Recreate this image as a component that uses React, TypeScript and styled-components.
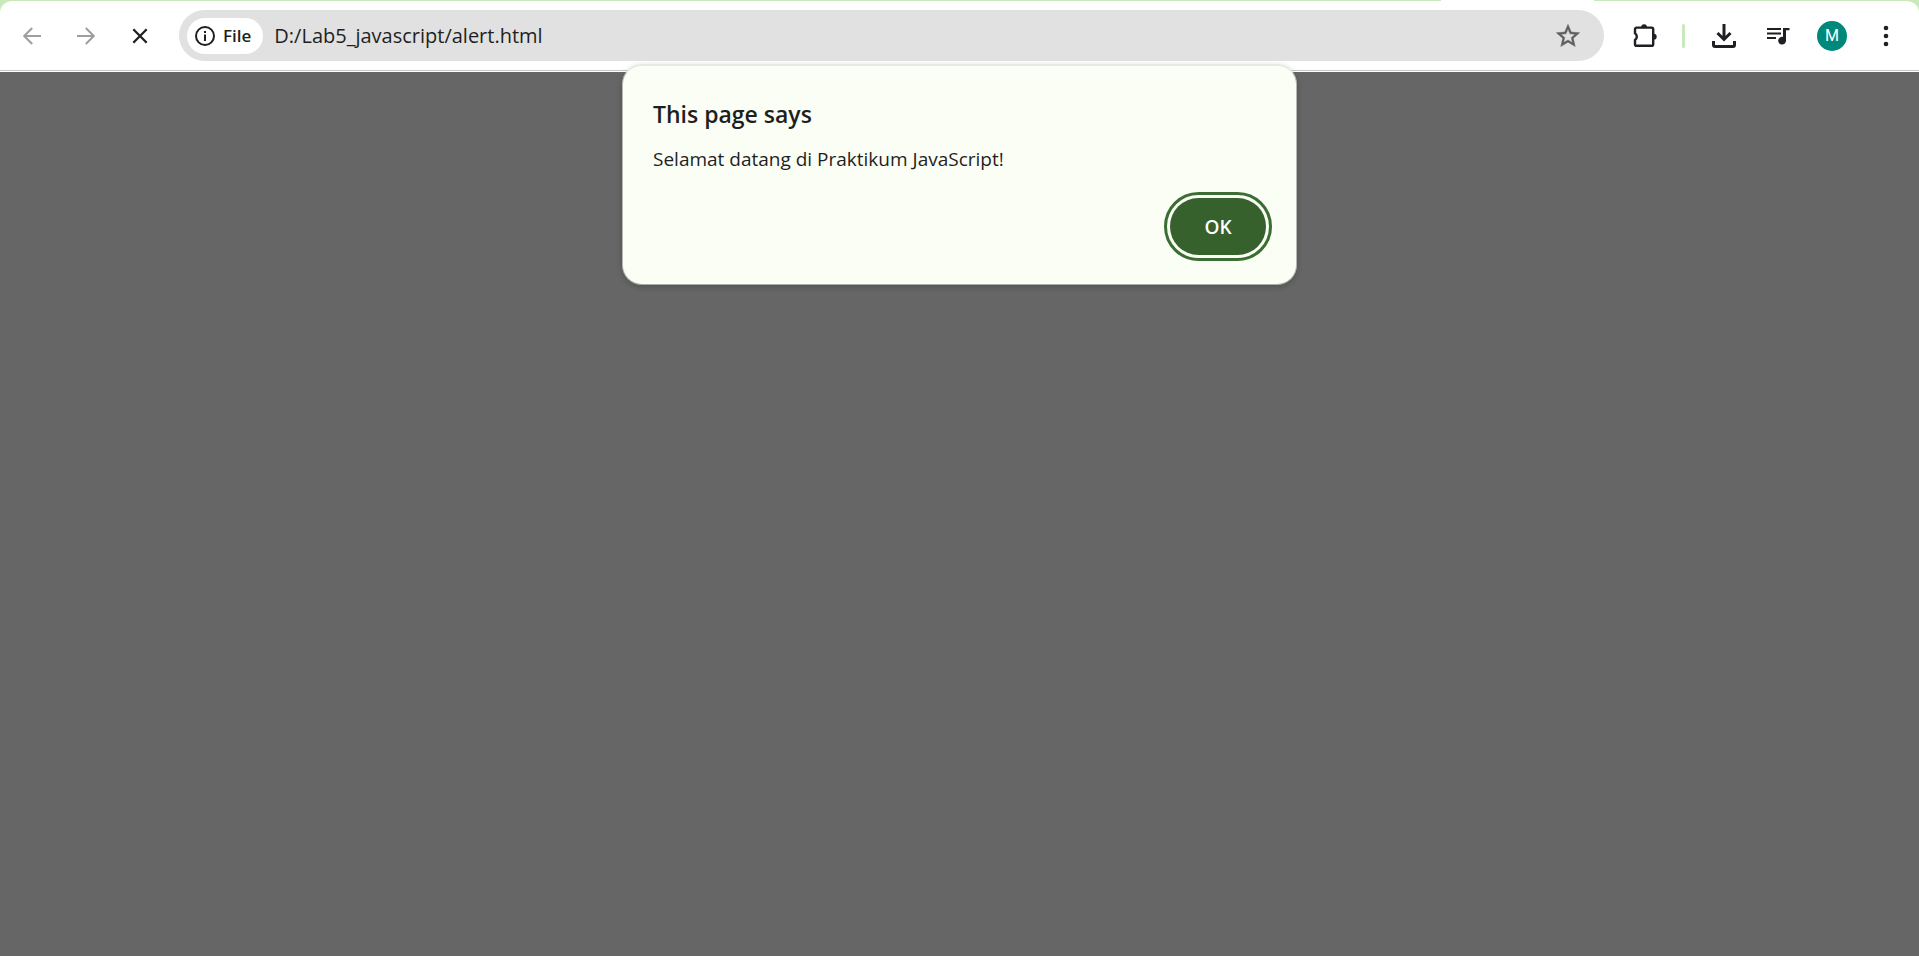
import React from "react";
import styled, { createGlobalStyle } from "styled-components";

const GlobalStyle = createGlobalStyle`
  * { box-sizing: border-box; }
  body { margin: 0; font-family: "Open Sans", "Noto Sans", sans-serif; color: #1f1f1f; }
  button, input { font: inherit; color: inherit; border: 0; padding: 0; background: none; }
  svg { display: block; }
`;

const Window = styled.div`
  position: relative;
  display: flex;
  flex-direction: column;
  min-height: 100vh;
  background: #666666;
`;

const Frame = styled.header`
  background: #c8e9b9;
`;

const TabStrip = styled.div`
  display: flex;
  justify-content: flex-end;
  height: 1px;
  padding-right: 325px;
`;

const ActiveTab = styled.div`
  width: 153px;
  background: #ffffff;
`;

const Toolbar = styled.div`
  display: flex;
  align-items: center;
  height: 71px;
  padding: 0 6px 2px 5px;
  background: #ffffff;
  border-radius: 12px 12px 0 0;
  box-shadow: inset 0 -1px #ffffff, inset 0 -2px #c4c7c5;
`;

const IconButton = styled.button<{ $color?: string }>`
  display: grid;
  place-items: center;
  flex: none;
  width: 54px;
  height: 53px;
  color: ${(p) => p.$color ?? "#1f1f24"};
`;

const AddressBar = styled.div`
  display: flex;
  align-items: center;
  flex: 1;
  height: 51px;
  margin: 0 14px 0 12px;
  padding: 0 9px 0 8px;
  background: #e1e1e1;
  border-radius: 26px;
`;

const SiteChip = styled.button`
  display: flex;
  align-items: center;
  gap: 8px;
  height: 36px;
  padding: 0 12px 0 8px;
  background: #ffffff;
  border-radius: 18px;
  font-size: 17px;
  font-weight: 600;
  line-height: 24px;
`;

const UrlInput = styled.input`
  flex: 1;
  min-width: 0;
  margin-left: 11px;
  font-size: 20px;
  line-height: 28px;
  outline: none;
`;

const Divider = styled.span`
  width: 3px;
  height: 24px;
  margin: 0 12px 0 10px;
  background: #c8e9b9;
  border-radius: 2px;
`;

const Avatar = styled.span`
  display: grid;
  place-items: center;
  width: 30px;
  height: 30px;
  border-radius: 50%;
  background: #00897b;
  color: #ffffff;
  font: 16px/30px Roboto, sans-serif;
`;

const Page = styled.main`
  flex: 1;
`;

const Dialog = styled.section`
  position: absolute;
  top: 64px;
  left: 0;
  right: 0;
  display: flex;
  flex-direction: column;
  width: 675px;
  max-width: 100%;
  margin: 0 auto;
  padding: 32px 30px 29px 30px;
  background: #fafef5;
  border: solid;
  border-width: 2px 1px 1px;
  border-color: #e8ebe4 #b4b8b0 #a9ada5;
  border-radius: 20px;
  box-shadow: 0 2px 6px rgba(0, 0, 0, 0.2);
`;

const DialogTitle = styled.h1`
  margin: 0;
  font-size: 23px;
  font-weight: 600;
  line-height: 32px;
`;

const DialogMessage = styled.p`
  margin: 15px 0 25px;
  font-size: 19px;
  line-height: 28px;
`;

const OkButton = styled.button`
  align-self: flex-end;
  width: 96px;
  height: 57px;
  border-radius: 29px;
  background: #36602c;
  color: #ffffff;
  font-size: 19px;
  font-weight: 600;
  outline: 3px solid #3c6d33;
  outline-offset: 3px;
`;

const Arrow = ({ forward = false }: { forward?: boolean }) => (
  <svg width="18" height="18" viewBox="0 0 18 18" fill="none" stroke="currentColor" strokeWidth="2">
    {forward ? <path d="M0 9h16.5M8.8 1l8 8-8 8" /> : <path d="M18 9H1.5M9.2 1l-8 8 8 8" />}
  </svg>
);

const StopIcon = () => (
  <svg width="16" height="16" viewBox="0 0 16 16" fill="none" stroke="currentColor" strokeWidth="2.3">
    <path d="M1.3 1.3l13.4 13.4M14.7 1.3L1.3 14.7" />
  </svg>
);

const InfoIcon = () => (
  <svg width="20" height="20" viewBox="0 0 20 20">
    <circle cx="10" cy="10" r="9" fill="none" stroke="currentColor" strokeWidth="2" />
    <path d="M9 5h2v2H9zM9 8.6h2V15H9z" fill="currentColor" />
  </svg>
);

const StarIcon = () => (
  <svg width="28" height="28" viewBox="0 0 24 24" fill="currentColor" stroke="currentColor" strokeWidth="0.4">
    <path d="M22 9.24l-7.19-.62L12 2 9.19 8.63 2 9.24l5.46 4.73L5.82 21 12 17.27 18.18 21l-1.63-7.03L22 9.24zM12 15.4l-3.76 2.27 1-4.28-3.32-2.88 4.38-.38L12 6.1l1.71 4.04 4.38.38-3.32 2.88 1 4.28L12 15.4z" />
  </svg>
);

const ExtensionsIcon = () => (
  <svg width="26" height="26" viewBox="0 0 26 26">
    <path
      d="M4.6 4.6h15a1.600 1.600 0 0 1 1.600 1.600v15a1.600 1.600 0 0 1-1.600 1.600h-15a1.600 1.600 0 0 1-1.600-1.600v-4.100a4.100 4.100 0 0 0 0-6.800V6.200a1.600 1.600 0 0 1 1.600-1.600z"
      fill="none"
      stroke="currentColor"
      strokeWidth="2.4"
    />
    <path d="M9.200 4.200a2.900 2.900 0 0 1 5.800 0zM21.800 10.800a2.900 2.900 0 0 1 0 5.800z" fill="currentColor" />
  </svg>
);

const DownloadIcon = () => (
  <svg width="24" height="24" viewBox="0 0 24 24" fill="none" stroke="currentColor" strokeWidth="3">
    <path d="M12 0v16M5.5 9l6.500 6.500L18.500 9" />
    <path d="M1.5 17v4a1.5 1.5 0 0 0 1.5 1.5h18a1.5 1.5 0 0 0 1.5-1.5v-4" />
  </svg>
);

const MediaIcon = () => (
  <svg width="24" height="18" viewBox="0 0 24 18" fill="currentColor">
    <path d="M1 1h14v2H1zM1 5.500h14v2H1zM1 10h9v2H1z" />
    <path d="M17 1h6.500v2.200H20V13.600a3.900 3.900 0 1 1-3-3.700z" />
  </svg>
);

const MenuIcon = () => (
  <svg width="6" height="22" viewBox="0 0 6 22" fill="currentColor">
    <circle cx="3" cy="3" r="2.3" />
    <circle cx="3" cy="11" r="2.3" />
    <circle cx="3" cy="19" r="2.3" />
  </svg>
);

export default function App() {
  return (
    <>
      <GlobalStyle />
      <Window>
        <Frame>
          <TabStrip>
            <ActiveTab />
          </TabStrip>
          <Toolbar>
            <IconButton aria-label="Back" $color="#9e9e9e">
              <Arrow />
            </IconButton>
            <IconButton aria-label="Forward" $color="#9e9e9e">
              <Arrow forward />
            </IconButton>
            <IconButton aria-label="Stop loading">
              <StopIcon />
            </IconButton>
            <AddressBar>
              <SiteChip>
                <InfoIcon />
                File
              </SiteChip>
              <UrlInput aria-label="Address" defaultValue="D:/Lab5_javascript/alert.html" spellCheck={false} />
              <IconButton aria-label="Bookmark this page" $color="#5f5f62">
                <StarIcon />
              </IconButton>
            </AddressBar>
            <IconButton aria-label="Extensions">
              <ExtensionsIcon />
            </IconButton>
            <Divider />
            <IconButton aria-label="Downloads">
              <DownloadIcon />
            </IconButton>
            <IconButton aria-label="Media controls">
              <MediaIcon />
            </IconButton>
            <IconButton aria-label="Profile">
              <Avatar>M</Avatar>
            </IconButton>
            <IconButton aria-label="Menu">
              <MenuIcon />
            </IconButton>
          </Toolbar>
        </Frame>
        <Page>
          <Dialog role="alertdialog" aria-labelledby="dialog-title" aria-describedby="dialog-message">
            <DialogTitle id="dialog-title">This page says</DialogTitle>
            <DialogMessage id="dialog-message">Selamat datang di Praktikum JavaScript!</DialogMessage>
            <OkButton>OK</OkButton>
          </Dialog>
        </Page>
      </Window>
    </>
  );
}
